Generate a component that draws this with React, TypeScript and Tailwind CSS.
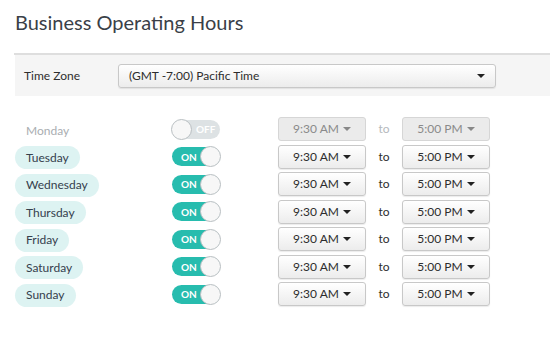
import React from "react";

const days = ["Monday", "Tuesday", "Wednesday", "Thursday", "Friday", "Saturday", "Sunday"];

function Caret({ light }: { light?: boolean }) {
  return (
    <span
      className={`inline-block w-0 h-0 border-l-[4px] border-r-[4px] border-t-[4px] border-l-transparent border-r-transparent ${
        light ? "border-t-[#888]" : "border-t-[#222]"
      }`}
    />
  );
}

function TimeButton({ label, disabled }: { label: string; disabled?: boolean }) {
  return (
    <div
      className={`w-[88px] h-[24px] rounded-[3px] border flex items-center justify-center gap-[4px] text-[12px] ${
        disabled
          ? "bg-[#ebebeb] border-[#d6d6d6] text-[#8a8a8a]"
          : "bg-gradient-to-b from-white to-[#ececec] border-[#c8c8c8] text-[#2d2d2d] shadow-[0_1px_1px_rgba(0,0,0,0.08)]"
      }`}
    >
      <span>{label}</span>
      <Caret light={disabled} />
    </div>
  );
}

function Toggle({ on }: { on: boolean }) {
  if (on) {
    return (
      <div className="w-[48px] h-[19px] rounded-full bg-[#27bcae] flex items-center relative">
        <span className="ml-[9px] text-[10px] font-bold text-white leading-none">ON</span>
        <span className="absolute right-[-1px] top-[-1px] w-[21px] h-[21px] rounded-full bg-[#f7f7f7] border border-[#b9bfc2]" />
      </div>
    );
  }
  return (
    <div className="w-[48px] h-[19px] rounded-full bg-[#dde2e4] flex items-center relative">
      <span className="absolute left-[-1px] top-[-1px] w-[21px] h-[21px] rounded-full bg-[#f7f7f7] border border-[#b9bfc2]" />
      <span className="ml-[24px] text-[10px] font-bold text-white leading-none">OFF</span>
    </div>
  );
}

export default function App() {
  return (
    <div
      className="w-[550px] h-[344px] bg-white overflow-hidden"
      style={{ fontFamily: "Lato, 'Open Sans', sans-serif" }}
    >
      <h1 className="pl-[15px] pt-[8px] text-[20px] leading-[28px] text-[#3a3f48]">Business Operating Hours</h1>
      <div className="mt-[17px] ml-[14px] border-t-2 border-[#dedede]" />
      <div className="ml-[15px] bg-[#f5f5f5] h-[41px] flex items-center">
        <span className="ml-[9px] w-[94px] text-[12px] text-[#2e2e2e]">Time Zone</span>
        <div className="w-[378px] h-[24px] rounded-[3px] border border-[#c8c8c8] bg-gradient-to-b from-white to-[#ececec] flex items-center justify-between pl-[10px] pr-[10px] text-[12px] text-[#2d2d2d] shadow-[0_1px_1px_rgba(0,0,0,0.08)]">
          <span>(GMT -7:00) Pacific Time</span>
          <Caret />
        </div>
      </div>
      <div className="mt-[21px] flex flex-col gap-[3.5px]">
        {days.map((d, i) => {
          const off = i === 0;
          return (
            <div key={d} className="h-[24px] flex items-center">
              <div className="w-[172px] pl-[15px]">
                {off ? (
                  <span className="inline-block pl-[11px] text-[12px] text-[#a9adb1]">{d}</span>
                ) : (
                  <span className="inline-flex items-center h-[23px] px-[11px] rounded-full bg-[#ddf3f2] text-[12px] text-[#35404d]">
                    {d}
                  </span>
                )}
              </div>
              <Toggle on={!off} />
              <div className="ml-[58px]">
                <TimeButton label="9:30 AM" disabled={off} />
              </div>
              <span className={`w-[36px] text-center text-[12px] ${off ? "text-[#b5b9bd]" : "text-[#2d2d2d]"}`}>to</span>
              <TimeButton label="5:00 PM" disabled={off} />
            </div>
          );
        })}
      </div>
    </div>
  );
}
